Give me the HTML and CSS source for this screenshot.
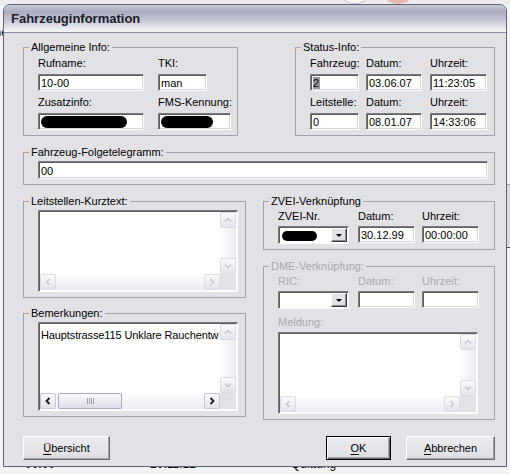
FILE: index.html
```html
<!DOCTYPE html>
<html lang="de">
<head>
    <meta charset="UTF-8">
    <title>Fahrzeuginformation</title>
    <link rel="stylesheet" href="styles.css">
</head>
<body>
<div class="desktop">
    <!-- Reste der Fenster im Hintergrund -->
    <div class="bg-top"><span class="bg-bubble"></span><span class="bg-face"></span></div>
    <div class="bg-left">Name</div>
    <div class="bg-right"></div>
    <div class="bg-list"><span>00:00</span><span>20:11:12</span><span>Quittung</span></div>

    <div class="window">
        <div class="titlebar">Fahrzeuginformation</div>
        <div class="client">

            <div class="row row-top">
                <fieldset class="group group-allg">
                    <legend>Allgemeine Info:</legend>
                    <div class="fields fields-allg">
                        <div class="field"><span>Rufname:</span><span class="edit w106">10-00</span></div>
                        <div class="field"><span>TKI:</span><span class="edit w49">man</span></div>
                        <div class="field"><span>Zusatzinfo:</span><span class="edit w106"><i class="blot blot-zusatz"></i></span></div>
                        <div class="field"><span>FMS-Kennung:</span><span class="edit w73"><i class="blot blot-fms"></i></span></div>
                    </div>
                </fieldset>

                <fieldset class="group group-status">
                    <legend>Status-Info:</legend>
                    <div class="fields fields-status">
                        <div class="field"><span>Fahrzeug:</span><span class="edit w49"><b class="sel">2</b></span></div>
                        <div class="field"><span>Datum:</span><span class="edit w56">03.06.07</span></div>
                        <div class="field"><span>Uhrzeit:</span><span class="edit w57">11:23:05</span></div>
                        <div class="field"><span>Leitstelle:</span><span class="edit w49">0</span></div>
                        <div class="field"><span>Datum:</span><span class="edit w56">08.01.07</span></div>
                        <div class="field"><span>Uhrzeit:</span><span class="edit w57">14:33:06</span></div>
                    </div>
                </fieldset>
            </div>

            <fieldset class="group group-folge">
                <legend>Fahrzeug-Folgetelegramm:</legend>
                <div class="group-body">
                    <span class="edit edit-wide">00</span>
                </div>
            </fieldset>

            <div class="row row-mid">
                <div class="col col-left">
                    <fieldset class="group group-kurz">
                        <legend>Leitstellen-Kurztext:</legend>
                        <div class="group-body">
                            <div class="memo memo-kurz">
                                <div class="memo-text"></div>
                                <div class="vscroll">
                                    <span class="sb-btn off"><svg viewBox="0 0 8 8"><polyline points="1,5.5 4,2.5 7,5.5"/></svg></span>
                                    <span class="sb-track"></span>
                                    <span class="sb-btn off"><svg viewBox="0 0 8 8"><polyline points="1,2.5 4,5.5 7,2.5"/></svg></span>
                                </div>
                                <div class="hscroll">
                                    <span class="sb-btn off"><svg viewBox="0 0 8 8"><polyline points="5.5,1 2.5,4 5.5,7"/></svg></span>
                                    <span class="sb-track"></span>
                                    <span class="sb-btn off"><svg viewBox="0 0 8 8"><polyline points="2.5,1 5.5,4 2.5,7"/></svg></span>
                                </div>
                                <div class="sb-corner"></div>
                            </div>
                        </div>
                    </fieldset>

                    <fieldset class="group group-bem">
                        <legend>Bemerkungen:</legend>
                        <div class="group-body">
                            <div class="memo memo-bem">
                                <div class="memo-text">Hauptstrasse115 Unklare Rauchentw</div>
                                <div class="vscroll">
                                    <span class="sb-btn off"><svg viewBox="0 0 8 8"><polyline points="1,5.5 4,2.5 7,5.5"/></svg></span>
                                    <span class="sb-track"></span>
                                    <span class="sb-btn off"><svg viewBox="0 0 8 8"><polyline points="1,2.5 4,5.5 7,2.5"/></svg></span>
                                </div>
                                <div class="hscroll">
                                    <span class="sb-btn"><svg viewBox="0 0 8 8"><polyline points="5.5,1 2.5,4 5.5,7"/></svg></span>
                                    <span class="sb-thumb"><i></i><i></i><i></i><i></i></span>
                                    <span class="sb-track"></span>
                                    <span class="sb-btn"><svg viewBox="0 0 8 8"><polyline points="2.5,1 5.5,4 2.5,7"/></svg></span>
                                </div>
                                <div class="sb-corner"></div>
                            </div>
                        </div>
                    </fieldset>
                </div>

                <div class="col col-right">
                    <fieldset class="group group-zvei">
                        <legend>ZVEI-Verknüpfung</legend>
                        <div class="fields fields-link">
                            <div class="field"><span>ZVEI-Nr.</span>
                                <span class="combo"><span class="combo-text"><i class="blot blot-zvei"></i></span><span class="drop-btn"></span></span>
                            </div>
                            <div class="field"><span>Datum:</span><span class="edit w57">30.12.99</span></div>
                            <div class="field"><span>Uhrzeit:</span><span class="edit w57">00:00:00</span></div>
                        </div>
                    </fieldset>

                    <fieldset class="group group-dme disabled">
                        <legend>DME-Verknüpfung:</legend>
                        <div class="fields fields-link">
                            <div class="field"><span>RIC:</span>
                                <span class="combo"><span class="combo-text"></span><span class="drop-btn"></span></span>
                            </div>
                            <div class="field"><span>Datum:</span><span class="edit w57"></span></div>
                            <div class="field"><span>Uhrzeit:</span><span class="edit w57"></span></div>
                        </div>
                        <div class="field field-meldung">
                            <span>Meldung:</span>
                            <div class="memo memo-dme">
                                <div class="memo-text"></div>
                                <div class="vscroll">
                                    <span class="sb-btn off"><svg viewBox="0 0 8 8"><polyline points="1,5.5 4,2.5 7,5.5"/></svg></span>
                                    <span class="sb-track"></span>
                                    <span class="sb-btn off"><svg viewBox="0 0 8 8"><polyline points="1,2.5 4,5.5 7,2.5"/></svg></span>
                                </div>
                                <div class="hscroll">
                                    <span class="sb-btn off"><svg viewBox="0 0 8 8"><polyline points="5.5,1 2.5,4 5.5,7"/></svg></span>
                                    <span class="sb-track"></span>
                                    <span class="sb-btn off"><svg viewBox="0 0 8 8"><polyline points="2.5,1 5.5,4 2.5,7"/></svg></span>
                                </div>
                                <div class="sb-corner"></div>
                            </div>
                        </div>
                    </fieldset>
                </div>
            </div>

            <div class="buttons">
                <button class="btn btn-uebersicht"><u>Ü</u>bersicht</button>
                <span class="spacer"></span>
                <button class="btn btn-ok default"><u>O</u>K</button>
                <button class="btn btn-abbrechen"><u>A</u>bbrechen</button>
            </div>
        </div>
    </div>
</div>
</body>
</html>
```

FILE: styles.css
```css
/* --- Grundlagen: Windows-Dialog im Silber-Stil --- */
:root {
    --dialog-bg: #e2e1e6;
    --group-line: #a3a3ab;
    --disabled-text: #a9a8ae;
    --edit-dark: #7c7c80;
    --edit-darker: #5e5e62;
}

* {
    box-sizing: border-box;
}

body {
    margin: 0;
    font-family: "Liberation Sans", Arial, sans-serif;
    font-size: 11px;
    line-height: 13px;
    color: #000;
    background: #f3f3f5;
}

.desktop {
    position: relative;
    width: 510px;
    height: 474px;
    overflow: hidden;
}

/* --- Hintergrund --- */
.bg-top {
    height: 6px;
    background: #ededf0;
}

.bg-bubble {
    position: absolute;
    left: 344px;
    top: -6px;
    width: 22px;
    height: 10px;
    border: 1px solid #b9b9c4;
    border-radius: 50%;
    background: #fafafa;
}

.bg-face {
    position: absolute;
    left: 387px;
    top: -6px;
    width: 22px;
    height: 10px;
    border-radius: 50%;
    background: #e9b9b0;
}

.bg-left {
    position: absolute;
    left: -22px;
    top: 26px;
}

.bg-right {
    position: absolute;
    left: 507px;
    top: 184px;
    width: 6px;
    height: 64px;
    border-top: 1px solid #9c9cb0;
    border-bottom: 1px solid #505060;
    background: #d9d9e2;
}

.bg-list {
    position: absolute;
    left: 25px;
    top: 458px;
    display: flex;
    gap: 95px;
    font-size: 12px;
}

/* --- Fenster --- */
.window {
    position: absolute;
    left: 3px;
    top: 4px;
    width: 504px;
    height: 463px;
    display: flex;
    flex-direction: column;
    border: 1px solid #64647a;
    border-radius: 7px 7px 0 0;
    background: var(--dialog-bg);
    overflow: hidden;
}

.titlebar {
    height: 28px;
    padding: 3px 0 0 7px;
    font-size: 13px;
    font-weight: bold;
    line-height: 22px;
    color: #1c1c2a;
    background: linear-gradient(#cacad8 0%, #aaabbf 25%, #c3c4d3 55%, #ebebf1 88%, #f5f5f8 100%);
    border-bottom: 1px solid #8d8d9c;
}

.client {
    flex: 1;
    display: flex;
    flex-direction: column;
    gap: 10px;
    padding: 8px 11px 0 19px;
}

.row {
    display: flex;
    justify-content: space-between;
    align-items: flex-start;
}

.col {
    display: flex;
    flex-direction: column;
}

.col-left {
    width: 223px;
    gap: 9px;
}

.col-right {
    width: 232px;
    gap: 10px;
}

/* --- Gruppenrahmen --- */
.group {
    margin: 0;
    padding: 0;
    min-width: 0;
    border: 1px solid var(--group-line);
}

.group legend {
    margin-left: 5px;
    padding: 0 2px;
    line-height: 13px;
}

.group-body {
    padding: 2px 8px 5px 14px;
}

.group.disabled {
    color: var(--disabled-text);
}

.group-allg {
    width: 215px;
}

.group-status {
    width: 200px;
}

/* --- Feldraster --- */
.fields {
    display: grid;
    row-gap: 5px;
    padding: 3px 0 5px 14px;
}

.fields-allg {
    grid-template-columns: 120px 73px;
}

.fields-status {
    grid-template-columns: 56px 64px 57px;
}

.fields-link {
    grid-template-columns: 80px 64px 57px;
    padding: 2px 0 5px 14px;
}

.fields-link .field {
    gap: 3px;
}

.field {
    display: flex;
    flex-direction: column;
    align-items: flex-start;
    gap: 4px;
    white-space: nowrap;
}

.field-meldung {
    padding: 2px 0 5px 14px;
    gap: 3px;
}

/* --- Eingabefelder --- */
.edit {
    display: block;
    height: 17px;
    padding: 2px 2px 0;
    border: 1px solid;
    border-color: var(--edit-dark) #fbfbfb #fbfbfb var(--edit-dark);
    box-shadow: inset 1px 1px var(--edit-darker), inset -1px -1px #d8d7dc;
    background: #fff;
    color: #000;
    overflow: hidden;
    white-space: nowrap;
}

.w49 { width: 49px; }
.w56 { width: 56px; }
.w57 { width: 57px; }
.w73 { width: 73px; }
.w106 { width: 106px; }

.edit-wide {
    width: 450px;
    height: 18px;
    padding-top: 3px;
}

.group-folge .group-body {
    padding-bottom: 5px;
}

.sel {
    font-weight: normal;
    background: #9a9aa0;
    padding: 0 1px 0 0;
}

/* geschwärzte Angaben */
.blot {
    display: block;
    height: 12px;
    margin-top: 0;
    border-radius: 6px;
    background: #000;
}

.blot-zusatz { width: 86px; }
.blot-fms { width: 52px; }
.blot-zvei { width: 35px; height: 10px; margin: 2px 0 0 1px; }

/* --- Kombinationsfeld --- */
.combo {
    display: flex;
    width: 71px;
    height: 18px;
    padding: 2px;
    border: 1px solid;
    border-color: var(--edit-dark) #fbfbfb #fbfbfb var(--edit-dark);
    box-shadow: inset 1px 1px var(--edit-darker);
    background: #fff;
}

.combo-text {
    flex: 1;
}

.drop-btn {
    position: relative;
    width: 16px;
    margin: -1px -1px -1px 0;
    border: 1px solid;
    border-color: #fff #3c3c40 #3c3c40 #fff;
    box-shadow: inset -1px -1px #8a8a90;
    background: var(--dialog-bg);
}

.drop-btn::after {
    content: "";
    position: absolute;
    left: 4px;
    top: 5px;
    border-left: 3px solid transparent;
    border-right: 3px solid transparent;
    border-top: 3px solid #000;
}

/* --- Mehrzeilige Felder mit Bildlaufleisten --- */
.memo {
    display: grid;
    grid-template-columns: 1fr 16px;
    grid-template-rows: 1fr 16px;
    padding: 1px;
    border: 1px solid;
    border-color: var(--edit-dark) #fbfbfb #fbfbfb var(--edit-dark);
    box-shadow: inset 1px 1px var(--edit-darker);
    background: #fff;
}

.memo-kurz {
    width: 200px;
    height: 82px;
}

.memo-bem {
    width: 200px;
    height: 89px;
}

.memo-dme {
    width: 200px;
    height: 82px;
}

.memo-text {
    padding: 5px 0 0 1px;
    overflow: hidden;
    white-space: nowrap;
    letter-spacing: -0.12px;
    color: #000;
}

.vscroll,
.hscroll {
    display: flex;
}

.vscroll {
    flex-direction: column;
    background: linear-gradient(to right, #fdfdfe, #ececf2);
}

.hscroll {
    background: linear-gradient(#fdfdfe, #ececf2);
}

.sb-track {
    flex: 1;
}

.sb-btn {
    display: flex;
    align-items: center;
    justify-content: center;
    width: 16px;
    height: 16px;
    flex: none;
    border: 1px solid #c6c6d2;
    border-radius: 2px;
    background: linear-gradient(#fbfbfd, #e3e3ea);
}

.sb-btn svg {
    width: 8px;
    height: 8px;
    fill: none;
    stroke: #1e1e24;
    stroke-width: 1.8;
}

.sb-btn.off {
    border-color: #dcdce4;
}

.sb-btn.off svg {
    stroke: #c4c4cc;
    stroke-width: 1.3;
}

.sb-thumb {
    display: flex;
    align-items: center;
    justify-content: center;
    gap: 1px;
    width: 64px;
    margin-left: 2px;
    border: 1px solid #a9a9bc;
    border-radius: 2px;
    background: linear-gradient(#fcfcfe, #dcdce6);
}

.sb-thumb i {
    width: 1px;
    height: 6px;
    background: #9c9cae;
}

.sb-corner {
    background: var(--dialog-bg);
}

/* --- Schaltflächen --- */
.buttons {
    display: flex;
    gap: 15px;
    margin-top: 6px;
}

.spacer {
    flex: 1;
}

.btn {
    height: 24px;
    padding: 0;
    font: inherit;
    color: #000;
    border: 1px solid;
    border-color: #fff #6a6a70 #6a6a70 #fff;
    box-shadow: inset -1px -1px #a4a4aa;
    background: linear-gradient(#ececf0, #dedde3);
}

.btn u {
    text-decoration: underline;
    text-underline-offset: 2px;
}

.btn-uebersicht { width: 87px; }
.btn-ok { width: 65px; }
.btn-abbrechen { width: 89px; }

.btn.default {
    border: 1px solid #000;
    box-shadow: inset 1px 1px #fff, inset -1px -1px #6a6a70, inset -2px -2px #a4a4aa;
}
```
